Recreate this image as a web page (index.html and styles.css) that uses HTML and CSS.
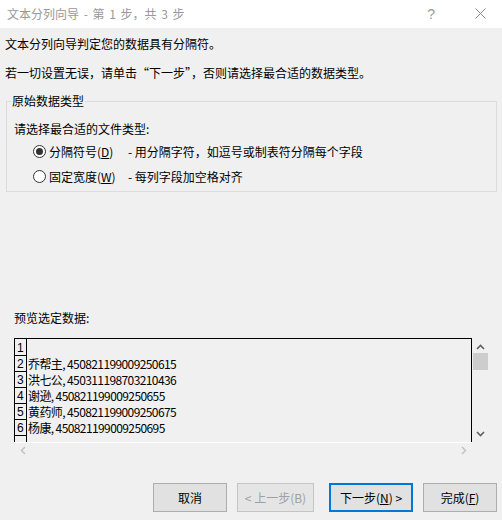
FILE: index.html
```html
<!DOCTYPE html>
<html lang="zh-CN">

<head>
    <meta charset="UTF-8">
    <title>文本分列向导 - 第 1 步，共 3 步</title>
    <link rel="stylesheet" href="styles.css">
</head>

<body>
    <div class="dialog">
        <div class="titlebar">
            <span class="title">文本分列向导 - 第 1 步，共 3 步</span>
            <span class="help">?</span>
            <svg class="close" width="11" height="11" viewBox="0 0 11 11">
                <path d="M0.5 0.5 L10.5 10.5 M10.5 0.5 L0.5 10.5" stroke="#8a8a8a" stroke-width="1" fill="none" />
            </svg>
        </div>

        <p class="intro first">文本分列向导判定您的数据具有分隔符。</p>
        <p class="intro">若一切设置无误，请单击“下一步”，否则请选择最合适的数据类型。</p>

        <div class="group">
            <div class="group-title">原始数据类型</div>
            <div class="group-hint">请选择最合适的文件类型:</div>
            <div class="radio-row first">
                <span class="radio checked"></span>
                <span class="radio-label">分隔符号(<u>D</u>)</span>
                <span class="radio-desc">- 用分隔字符，如逗号或制表符分隔每个字段</span>
            </div>
            <div class="radio-row">
                <span class="radio"></span>
                <span class="radio-label">固定宽度(<u>W</u>)</span>
                <span class="radio-desc">- 每列字段加空格对齐</span>
            </div>
        </div>

        <div class="preview-label">预览选定数据:</div>

        <div class="preview">
            <div class="list">
                <div class="nums">
                    <div class="num tall">1</div>
                    <div class="num">2</div>
                    <div class="num">3</div>
                    <div class="num">4</div>
                    <div class="num">5</div>
                    <div class="num">6</div>
                </div>
                <div class="lines">
                    <div class="line tall"></div>
                    <div class="line">乔帮主, 450821199009250615</div>
                    <div class="line">洪七公, 450311198703210436</div>
                    <div class="line">谢逊, 450821199009250655</div>
                    <div class="line">黄药师, 450821199009250675</div>
                    <div class="line">杨康, 450821199009250695</div>
                </div>
            </div>
            <div class="vscroll">
                <svg width="9" height="6" viewBox="0 0 9 6">
                    <path d="M1 5 L4.5 1.5 L8 5" stroke="#606060" stroke-width="1.6" fill="none" />
                </svg>
                <div class="thumb"></div>
                <div class="vspace"></div>
                <svg width="9" height="6" viewBox="0 0 9 6">
                    <path d="M1 1 L4.5 4.5 L8 1" stroke="#606060" stroke-width="1.6" fill="none" />
                </svg>
            </div>
            <div class="hscroll">
                <svg width="6" height="9" viewBox="0 0 6 9">
                    <path d="M5 1 L1.5 4.5 L5 8" stroke="#c4c4c4" stroke-width="1.6" fill="none" />
                </svg>
                <svg width="6" height="9" viewBox="0 0 6 9">
                    <path d="M1 1 L4.5 4.5 L1 8" stroke="#c4c4c4" stroke-width="1.6" fill="none" />
                </svg>
            </div>
            <div class="corner"></div>
        </div>

        <div class="buttons">
            <button type="button" class="btn cancel">取消</button>
            <button type="button" class="btn prev" disabled>&lt; 上一步(B)</button>
            <button type="button" class="btn next">下一步(<u>N</u>) &gt;</button>
            <button type="button" class="btn finish">完成(<u>F</u>)</button>
        </div>
    </div>
</body>

</html>
```

FILE: styles.css
```css
body {
    margin: 0;
    background-color: #f0f0f0;
    font-family: "Noto Sans CJK SC", "Noto Sans", sans-serif;
    font-size: 12px;
    color: #000;
}

.dialog {
    width: 502px;
    height: 520px;
    overflow: hidden;
}

.titlebar {
    display: flex;
    align-items: center;
    height: 27px;
    padding: 0 0 1px 7px;
    background-color: #fff;
    color: #999;
}

.title {
    flex: 1;
    line-height: 16px;
    word-spacing: 2px;
}

.help {
    font-family: "Liberation Sans", sans-serif;
    font-size: 14px;
    color: #9a9a9a;
    margin-right: 40px;
}

.close {
    margin-right: 16px;
}

.intro {
    margin: 13px 0 0 5px;
    line-height: 16px;
}

.intro.first {
    margin-top: 8px;
}

.group {
    margin: 20px 5px 0 6px;
    padding: 0 7px 7px 7px;
    border: 1px solid #dcdcdc;
}

.group-title {
    width: fit-content;
    margin: -9px 0 0 -3px;
    padding: 0 1px;
    line-height: 16px;
    background-color: #f0f0f0;
}

.group-hint {
    margin-top: 12px;
    line-height: 16px;
}

.radio-row {
    display: flex;
    align-items: center;
    height: 16px;
    margin-top: 9px;
    padding-left: 19px;
}

.radio-row.first {
    margin-top: 6px;
}

.radio {
    box-sizing: border-box;
    width: 13px;
    height: 13px;
    border: 1px solid #333;
    border-radius: 50%;
    background-color: #fff;
    display: flex;
    align-items: center;
    justify-content: center;
}

.radio.checked::after {
    content: '';
    width: 7px;
    height: 7px;
    border-radius: 50%;
    background-color: #333;
}

.radio-label {
    width: 79px;
    margin-left: 3px;
}

.preview-label {
    margin: 118px 0 0 14px;
    line-height: 16px;
}

.preview {
    display: grid;
    grid-template-columns: 458px 17px;
    grid-template-rows: 104px 15px;
    margin: 12px 0 0 14px;
    width: 475px;
}

.list {
    display: flex;
    border: 1px solid #000;
    border-bottom: none;
    overflow: hidden;
}

.nums {
    width: 11px;
    border-right: 1px solid #000;
}

.num {
    height: 15px;
    border-bottom: 1px solid #000;
    padding-left: 2px;
    font-family: "Liberation Sans", sans-serif;
    font-size: 12px;
    line-height: 17px;
    overflow: hidden;
}

.num.tall {
    height: 16px;
    line-height: 19px;
}

.lines {
    flex: 1;
    padding-left: 1px;
}

.line {
    height: 16px;
    line-height: 16px;
    letter-spacing: -0.6px;
    white-space: nowrap;
}

.line.tall {
    height: 17px;
}

.vscroll {
    display: flex;
    flex-direction: column;
    align-items: center;
    padding: 6px 0 5px;
    box-sizing: border-box;
}

.thumb {
    width: 15px;
    height: 17px;
    margin-top: 3px;
    background-color: #cdcdcd;
}

.vspace {
    flex: 1;
}

.hscroll {
    display: flex;
    justify-content: space-between;
    align-items: center;
    border-top: 1px solid #fff;
    padding: 0 5px 0 6px;
}

.buttons {
    display: flex;
    justify-content: flex-end;
    margin: 26px 5px 0 0;
}

.btn {
    box-sizing: border-box;
    height: 29px;
    width: 74px;
    margin-left: 10px;
    padding: 0;
    font-family: "Noto Sans CJK SC", "Noto Sans", sans-serif;
    font-size: 12px;
    color: #000;
    background-color: #e1e1e1;
    border: 1px solid #adadad;
}

.btn.prev {
    width: 77px;
    color: #a0a0a0;
    background-color: #e5e5e5;
    border-color: #c4c4c4;
}

.btn.next {
    width: 84px;
    margin-left: 15px;
    border: 2px solid #0078d7;
}
```
